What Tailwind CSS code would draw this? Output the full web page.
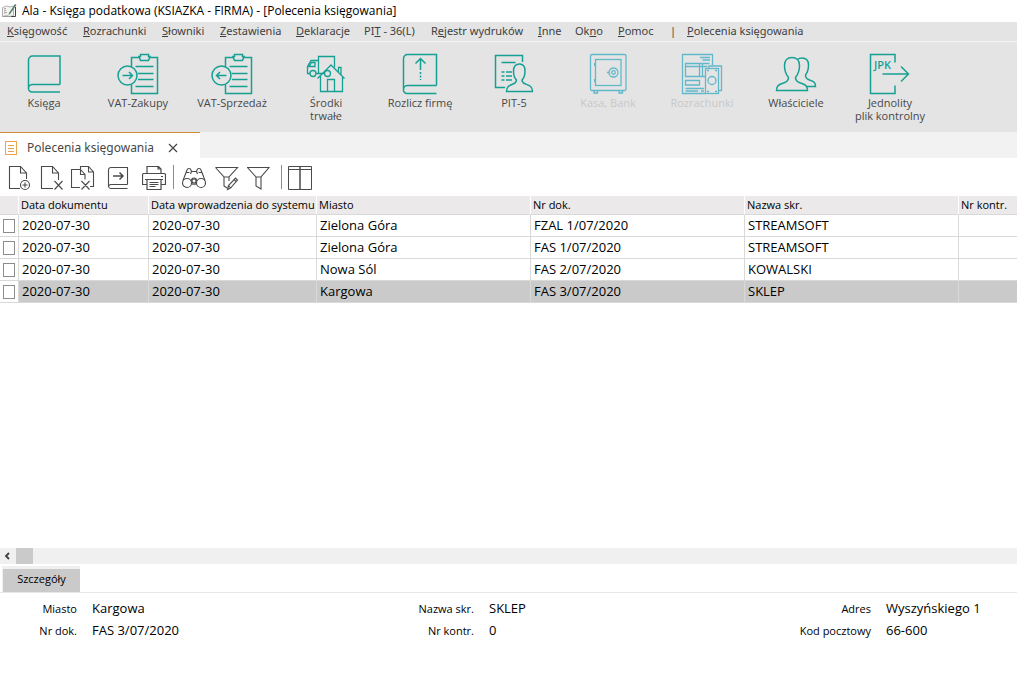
<!DOCTYPE html>
<html lang="pl">
<head>
<meta charset="utf-8">
<title>Ala - Księga podatkowa</title>
<script src="https://cdn.jsdelivr.net/npm/@tailwindcss/browser@4"></script>
</head>
<body class="flex min-h-screen flex-col bg-white font-['Open_Sans','Noto_Sans',sans-serif] text-black">

<header class="flex h-[22px] items-center gap-1 pl-[2px] text-[12px] whitespace-nowrap">
  <svg class="size-4 shrink-0" viewBox="0 0 16 16" fill="none">
    <path d="M.5 4.500l4-1.500 3.500 1 3.500-1v9.500l-3.500 1-3.500-1-4 1z" fill="#f4f4f0" stroke="#b0b0b0"/>
    <path d="M2 6l2-.5M2 8l2-.5M2 10l3-.5M.5 13.500h8" stroke="#999"/>
    <path d="M13 1l1.500 1-6.500 9-1.500 1 .5-2z" fill="#4f8067"/>
    <path d="M13.500 4v9.500H9" stroke="#444"/>
  </svg>
  <h1>Ala - Księga podatkowa (KSIAZKA - FIRMA) - [Polecenia księgowania]</h1>
</header>

<nav class="h-5 border-b border-[#f4f4f4] bg-[#e4e4e4] pl-[7px] font-['Noto_Sans','Open_Sans',sans-serif] text-[11px] leading-[18px] text-[#404040]">
  <ul class="grid grid-cols-[76px_79px_58px_76px_68px_67px_107px_37px_43px_52px_17px_auto] justify-start whitespace-nowrap">
    <li><a href="#"><u>K</u>sięgowość</a></li>
    <li><a href="#"><u>R</u>ozrachunki</a></li>
    <li><a href="#"><u>S</u>łowniki</a></li>
    <li><a href="#"><u>Z</u>estawienia</a></li>
    <li><a href="#"><u>D</u>eklaracje</a></li>
    <li><a href="#">PI<u>T</u> - 36(L)</a></li>
    <li><a href="#">R<u>e</u>jestr wydruków</a></li>
    <li><a href="#"><u>I</u>nne</a></li>
    <li><a href="#">Ok<u>n</u>o</a></li>
    <li><a href="#"><u>P</u>omoc</a></li>
    <li>|</li>
    <li><a href="#"><u>P</u>olecenia księgowania</a></li>
  </ul>
</nav>

<div class="flex h-[90px] items-start bg-[#e4e4e4] text-[11px] leading-[13px] text-[#484848]">
  <button class="flex w-[91px] flex-col items-center gap-px pt-[11px] pr-[3px]">
    <svg class="h-[42px] w-12" viewBox="0 0 48 42" fill="none" stroke="#16a094" stroke-width="1.500"><path d="M40 31.500V3H12.500a4 4 0 0 0-4 4v28.500a4 4 0 0 1 4-4H40M8.500 35.500a3.500 3.500 0 0 0 4 3.500H40"/></svg>
    Księga
  </button>
  <button class="flex w-[94px] flex-col items-center gap-px pt-[11px]">
    <svg class="h-[42px] w-12" viewBox="0 0 48 42" fill="none" stroke="#16a094" stroke-width="1.500"><path d="M17.500 13.500v-9h8M35.500 4.500h8v36h-26V31.500M26.500 1.500h8v2h1.500l-1.500 4h-8l-1.500-4h1.500zM21.500 13.500h18M24 20.500h15.500M24 26.500h15.500M21.500 33.500h18"/><circle cx="13.500" cy="22.500" r="9.500"/><path d="M8.500 22.500h10M15 19l3.500 3.500L15 26"/></svg>
    VAT-Zakupy
  </button>
  <button class="flex w-[94px] flex-col items-center gap-px pt-[11px]">
    <svg class="h-[42px] w-12" viewBox="0 0 48 42" fill="none" stroke="#16a094" stroke-width="1.500"><path d="M17.500 13.500v-9h8M35.500 4.500h8v36h-26V31.500M26.500 1.500h8v2h1.500l-1.500 4h-8l-1.500-4h1.500zM21.500 13.500h18M24 20.500h15.500M24 26.500h15.500M21.500 33.500h18"/><circle cx="13.500" cy="22.500" r="9.500"/><path d="M18.500 22.500h-10M12 19l-3.500 3.500L12 26"/></svg>
    VAT-Sprzedaż
  </button>
  <button class="flex w-[94px] flex-col items-center gap-px pt-[11px]">
    <svg class="h-[42px] w-12" viewBox="0 0 48 42" fill="none" stroke="#16a094" stroke-width="1.300"><path d="M32.500 14.500v-11h-16v17h6M8 20.500H5.500v-7l3.500-6h7.500M14 20.500h2.500M7 13.500h6v-4H9.500z"/><circle cx="11" cy="20.500" r="3"/><circle cx="25.500" cy="20.500" r="3"/><path d="M15.500 25.500L29 12l13.500 13.500M18.500 23v15.500h22V24M25.500 38.500v-12h7v12M36.500 19v-4.500H39v7.500"/></svg>
    <span>Środki<br>trwałe</span>
  </button>
  <button class="flex w-[94px] flex-col items-center gap-px pt-[11px]">
    <svg class="h-[42px] w-12" viewBox="0 0 48 42" fill="none" stroke="#16a094" stroke-width="1.500"><path d="M40.500 32.500v-31H11.500a4 4 0 0 0-4 4v31a4 4 0 0 1 4-4h29M7.500 36.500a3.500 3.500 0 0 0 4 4h29M24.500 17V6M19.500 10.500l5-5 5 5"/><path d="M24.500 19v8" stroke-dasharray="2 1.500"/></svg>
    Rozlicz firmę
  </button>
  <button class="flex w-[94px] flex-col items-center gap-px pt-[11px]">
    <svg class="h-[42px] w-12" viewBox="0 0 48 42" fill="none" stroke="#16a094" stroke-width="1.500"><path d="M32.500 9V2.500h-27v32H15M11.500 9.500h14"/><path d="M11.500 19h3M16 19h6M11.500 23h3M16 23h6M11.500 27h3M16 27h6"/><path d="M16.500 38.500h26c0-5-3-6-7-7.500-3-1-3.500-2-3.500-4 2-2 3-5 3-9 0-4.500-2-7-5.500-7s-6 2.500-6 7c0 4 1 7 3 9 0 2-.5 3-3.500 4-4 1.500-6.500 2.500-6.500 7.500z"/></svg>
    PIT-5
  </button>
  <button disabled class="flex w-[94px] flex-col items-center gap-px pt-[11px] text-[#c8c8c8]">
    <svg class="h-[42px] w-12" viewBox="0 0 48 42" fill="none" stroke="#62b8cb" stroke-width="1.300"><rect x="6.500" y="1.500" width="35.500" height="36" rx="1.500"/><rect x="11.500" y="6.500" width="25.500" height="26"/><circle cx="29.500" cy="19.500" r="4.500"/><circle cx="29.500" cy="19.500" r="1.800"/><path d="M25 19.500h-2M10 37.500v2.500h3.500v-2.500M35 37.500v2.500h3.500v-2.500"/><path d="M11 10v3M11 26v3" stroke-width="2"/></svg>
    Kasa, Bank
  </button>
  <button disabled class="flex w-[94px] flex-col items-center gap-px pt-[11px] text-[#c8c8c8]">
    <svg class="h-[42px] w-12" viewBox="0 0 48 42" fill="none" stroke="#62b8cb" stroke-width="1.300"><path d="M34.500 12.500v-11h-30v39h23M22 4.500h10M24.500 7h7.500M27 23.500H7.500v-13h24M7.500 13.500h22M21.500 10.500v13M24.500 10.500v13M7.500 27.500h14v4.500h-14zM7.500 35.500H26M7.500 38H20M23 38h3"/><path d="M31 15.500v-2.500h12.500v24.500h-3"/><rect x="27.500" y="15.500" width="13" height="25"/><circle cx="34" cy="27.500" r="4"/><path d="M29 17.500h2M37 17.500h2M29 38.500h2M37 38.500h2"/></svg>
    Rozrachunki
  </button>
  <button class="flex w-[94px] flex-col items-center gap-px pt-[11px]">
    <svg class="h-[42px] w-12" viewBox="0 0 48 42" fill="none" stroke="#16a094" stroke-width="1.500"><path d="M4.500 37.500h31c0-4.500-2-6-7-7.500-4-1.200-5-2.500-5-5.500 2.500-3 4-7 4-12 0-5-3-8-7.500-8s-7.500 3-7.500 8c0 5 1.500 9 4 12 0 3-1 4.300-5 5.500-5 1.500-7 3-7 7.500z"/><path d="M25.500 6.500c1-1 2.500-1.500 4.500-1.500 4 0 6.500 2.500 6.500 7 0 4.500-1 7.500-3 10 0 3 1 4 4 5 4.500 1.300 6 2.500 6 6.500h-8.500"/></svg>
    Właściciele
  </button>
  <button class="flex w-[94px] flex-col items-center gap-px pt-[11px]">
    <svg class="h-[42px] w-12" viewBox="0 0 48 42" fill="none" stroke="#16a094" stroke-width="1.500"><path d="M29 9.500v-8H4.500v39H29v-8M16.500 21h26M35 13.500l7.500 7.500-7.500 7.500"/><text x="8" y="16" font-size="11" font-weight="600" fill="#16a094" stroke="none">JPK</text></svg>
    <span>Jednolity<br>plik kontrolny</span>
  </button>
</div>

<div class="flex h-[26px] bg-[#f2f2f2]">
  <div class="flex w-[200px] items-center border-t border-[#d08a3c] bg-white pt-1 pl-[5px] font-['Noto_Sans','Open_Sans',sans-serif] text-[12px] text-[#484848]">
    <svg class="mr-2 h-[14px] w-[14px] shrink-0" viewBox="0 0 14 14" fill="none" stroke="#eaa34f"><rect x=".5" y=".5" width="11" height="13"/><path d="M3 4.500h6M3 7.500h6M3 10.500h6"/></svg>
    <span class="w-[141px] whitespace-nowrap">Polecenia księgowania</span>
    <button aria-label="Zamknij"><svg class="size-[10px]" viewBox="0 0 10 10" stroke="#444" stroke-width="1.200"><path d="M1 1l8 8M9 1L1 9"/></svg></button>
  </div>
</div>

<div class="flex h-[38px] items-start pt-[7px] pl-2" role="toolbar">
  <button aria-label="Dodaj" class="w-8"><svg class="h-[26px] w-6" viewBox="0 0 24 26" fill="none" stroke="#4a4a4a" stroke-width="1.100"><path d="M18.500 14V8l-6-6.500h-11v22H12M12.500 1.500V8h6"/><circle cx="17" cy="20" r="4.500"/><path d="M14.500 20h5M17 17.500v5"/></svg></button>
  <button aria-label="Usuń" class="w-[31px]"><svg class="h-[26px] w-6" viewBox="0 0 24 26" fill="none" stroke="#4a4a4a" stroke-width="1.100"><path d="M18.500 15V8l-6-6.500h-11v22H13M12.500 1.500V8h6M14.500 16l8 8.500M22.500 16l-8 8.500"/></svg></button>
  <button aria-label="Usuń wszystkie" class="w-9"><svg class="h-[26px] w-6" viewBox="0 0 24 26" fill="none" stroke="#4a4a4a" stroke-width="1.100"><path d="M9.500 4.500h-9v18H9M9.500 4.500l4.500 5v5M9.500 4.500v5H14M9.500 4.500v-3h8l5 5.500v14.500H19M17.500 1.500V7h5M10.500 16l8 8.500M18.500 16l-8 8.500"/></svg></button>
  <button aria-label="Wykonaj" class="w-[35px]"><svg class="h-[26px] w-6" viewBox="0 0 24 26" fill="none" stroke="#4a4a4a" stroke-width="1.100"><path d="M20.500 19.500v-17H4a2.500 2.500 0 0 0-2.500 2.500v17M1.500 22a2.500 2.500 0 0 1 2.500-2.500h16.500M1.500 21.500A2.500 2.500 0 0 0 4 23.500h16.500"/><path d="M6 11h10M12.500 7.500L16 11l-3.500 3.500" stroke-width="1.500"/></svg></button>
  <button aria-label="Drukuj" class="w-[31px]"><svg class="h-[26px] w-6" viewBox="0 0 24 26" fill="none" stroke="#4a4a4a" stroke-width="1.200"><path d="M5 8.500v-7h11.500L19 4v4.500M16 1.500V4h3M5 19.500H.5v-9.500q0-1.500 1.500-1.500h20q1.500 0 1.500 1.500v9.500H19M5 14.500h14v10H5zM3 14.500h18M7.500 17.500h9M7.500 19.500h9M7.500 21.500h6M19 11.500h2"/></svg></button>
  <div class="mr-2 h-6 w-px bg-[#8c8c8c]"></div>
  <button aria-label="Szukaj" class="w-[33px]"><svg class="h-[26px] w-6" viewBox="0 0 24 26" fill="none" stroke="#4a4a4a" stroke-width="1.100"><circle cx="5" cy="18" r="4.500"/><circle cx="19" cy="18" r="4.500"/><circle cx="12" cy="16" r="2"/><path d="M1 15.500L5 5c.5-2 3.500-2 4 0l.5 1.500h5L15 5c.5-2 3.500-2 4 0l4 10.500M9.500 6.500L8.500 9M14.500 6.500l1 2.500M9 16c.5-2 1.500-3 3-3s2.500 1 3 3M9.500 18.500q2.500 1.500 5 0M4.500 7.500h3M16.500 7.500h3"/></svg></button>
  <button aria-label="Edytuj filtr" class="w-8"><svg class="h-[26px] w-6" viewBox="0 0 24 26" fill="none" stroke="#4a4a4a" stroke-width="1.100"><path d="M.5 2.500h22L14 12v4M.5 2.500L9 12v9l3 2M9 12h5M12.500 24.500l1-4 7-7.500 2 2-7 8zM19 14.500l2 2M13.500 20.500l2 2.500"/></svg></button>
  <button aria-label="Filtr" class="w-[34px]"><svg class="h-[26px] w-6" viewBox="0 0 24 26" fill="none" stroke="#4a4a4a" stroke-width="1.100"><path d="M.5 2.500h21.500L14 12v12l-5-3v-9zM9 12h5"/></svg></button>
  <div class="mr-[6px] h-6 w-px bg-[#8c8c8c]"></div>
  <button aria-label="Kolumny" class="w-6"><svg class="h-[26px] w-6" viewBox="0 0 24 26" fill="none" stroke="#4a4a4a"><path d="M.5 1.500h23v23H.5zM.5 4.500h23"/><path d="M12 1.500v23" stroke-width="1.500"/></svg></button>
</div>

<main class="grow overflow-hidden">
  <table class="w-full table-fixed border-separate border-spacing-0 text-left whitespace-nowrap">
    <colgroup><col class="w-[19px]"><col class="w-[130px]"><col class="w-[168px]"><col class="w-[214px]"><col class="w-[214px]"><col class="w-[214px]"><col></colgroup>
    <thead class="bg-[#ebe9e9] text-[11px] leading-[18px] [&_th]:border-b [&_th]:border-b-[#d9d9d9] [&_th]:border-r [&_th]:border-r-white [&_th]:pl-[2px] [&_th]:font-normal [&_th:last-child]:border-r-0">
      <tr><th></th><th>Data dokumentu</th><th>Data wprowadzenia do systemu</th><th>Miasto</th><th>Nr dok.</th><th>Nazwa skr.</th><th>Nr kontr.</th></tr>
    </thead>
    <tbody class="text-[13px] leading-[21px] [&_td]:h-[22px] [&_td]:border-r [&_td]:border-b [&_td]:border-[#d9d9d9] [&_td]:pl-[3px] [&_td:last-child]:border-r-0">
      <tr><td><input type="checkbox" aria-label="Zaznacz FZAL 1/07/2020" class="block h-[14px] w-3 appearance-none border border-[#8c8c8c] bg-white"></td><td>2020-07-30</td><td>2020-07-30</td><td>Zielona Góra</td><td>FZAL 1/07/2020</td><td>STREAMSOFT</td><td></td></tr>
      <tr><td><input type="checkbox" aria-label="Zaznacz FAS 1/07/2020" class="block h-[14px] w-3 appearance-none border border-[#8c8c8c] bg-white"></td><td>2020-07-30</td><td>2020-07-30</td><td>Zielona Góra</td><td>FAS 1/07/2020</td><td>STREAMSOFT</td><td></td></tr>
      <tr><td><input type="checkbox" aria-label="Zaznacz FAS 2/07/2020" class="block h-[14px] w-3 appearance-none border border-[#8c8c8c] bg-white"></td><td>2020-07-30</td><td>2020-07-30</td><td>Nowa Sól</td><td>FAS 2/07/2020</td><td>KOWALSKI</td><td></td></tr>
      <tr class="bg-[#cacaca]"><td class="bg-white"><input type="checkbox" aria-label="Zaznacz FAS 3/07/2020" class="block h-[14px] w-3 appearance-none border border-[#8c8c8c] bg-white"></td><td>2020-07-30</td><td>2020-07-30</td><td>Kargowa</td><td>FAS 3/07/2020</td><td>SKLEP</td><td></td></tr>
    </tbody>
  </table>
</main>

<div class="flex h-4 items-center bg-[#f0f0f0]">
  <button aria-label="Przewiń w lewo" class="flex w-4 pl-1"><svg class="h-2 w-[6px]" viewBox="0 0 6 8" fill="none" stroke="#404040" stroke-width="1.800"><path d="M5 1L2 4l3 3"/></svg></button>
  <div class="h-4 w-[17px] bg-[#cacaca]"></div>
</div>

<section class="h-[113px] pt-[3px]">
  <div class="flex h-[26px] items-end border-b border-[#e8e8e8] pl-[2px]">
    <button class="h-[26px] w-[78px] border-t-3 border-l border-[#f0f0f0] bg-[#cacaca] pb-1 text-[11px] leading-[18px]">Szczegóły</button>
  </div>
  <dl class="grid grid-cols-[77px_290fr_77px_290fr_77px_131fr] gap-x-[15px] pt-[5px] leading-[22px] whitespace-nowrap [&_dd]:text-[13px] [&_dd]:leading-[20px] [&_dt]:text-right [&_dt]:text-[11px]">
    <dt>Miasto</dt><dd>Kargowa</dd><dt>Nazwa skr.</dt><dd>SKLEP</dd><dt>Adres</dt><dd>Wyszyńskiego 1</dd>
    <dt>Nr dok.</dt><dd>FAS 3/07/2020</dd><dt>Nr kontr.</dt><dd>0</dd><dt>Kod pocztowy</dt><dd>66-600</dd>
  </dl>
</section>
</body>
</html>
